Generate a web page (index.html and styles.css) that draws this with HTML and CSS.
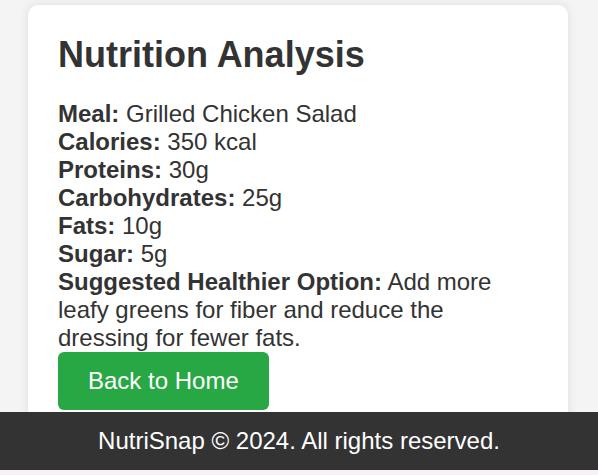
FILE: index.html
```html
<!DOCTYPE html>
<html lang="en">
<head>
<meta charset="utf-8">
<title>Nutrition Analysis</title>
<link rel="stylesheet" href="styles.css">
</head>
<body>
<main class="card">
  <h1 class="title">Nutrition Analysis</h1>
  <p class="details">
    <strong>Meal:</strong> Grilled Chicken Salad<br>
    <strong>Calories:</strong> 350 kcal<br>
    <strong>Proteins:</strong> 30g<br>
    <strong>Carbohydrates:</strong> 25g<br>
    <strong>Fats:</strong> 10g<br>
    <strong>Sugar:</strong> 5g<br>
    <strong>Suggested Healthier Option:</strong> Add more leafy greens for fiber and reduce the dressing for fewer fats.
  </p>
  <a class="btn" href="#">Back to Home</a>
</main>
<footer class="footer">NutriSnap © 2024. All rights reserved.</footer>
<div class="bottom-strip"></div>
</body>
</html>
```

FILE: styles.css
```css
html, body {
  margin: 0;
  padding: 0;
}

body {
  background: #f4f4f4;
  font-family: "Liberation Sans", Arial, sans-serif;
  font-size: 24px;
  color: #333;
}

.card {
  box-sizing: border-box;
  width: 540px;
  margin: 5px 0 0 28px;
  padding: 29px 30px 30px;
  background: #fff;
  border-radius: 10px;
  box-shadow: 0 0 10px rgba(0, 0, 0, 0.1);
}

.title {
  margin: 0 0 24px;
  font-size: 36px;
  font-weight: bold;
  color: #333;
}

.details {
  margin: 0;
  line-height: normal;
}

.details strong {
  font-weight: bold;
}

.btn {
  display: inline-block;
  padding: 15px 30px;
  background: #28a745;
  color: #fff;
  text-decoration: none;
  border-radius: 6px;
}

.footer {
  position: fixed;
  left: 0;
  right: 0;
  bottom: 5px;
  padding: 15px 0;
  background: #333;
  color: #fff;
  text-align: center;
}

.bottom-strip {
  position: fixed;
  left: 0;
  right: 0;
  bottom: 0;
  height: 5px;
  background: #f8f1f8;
}
```
